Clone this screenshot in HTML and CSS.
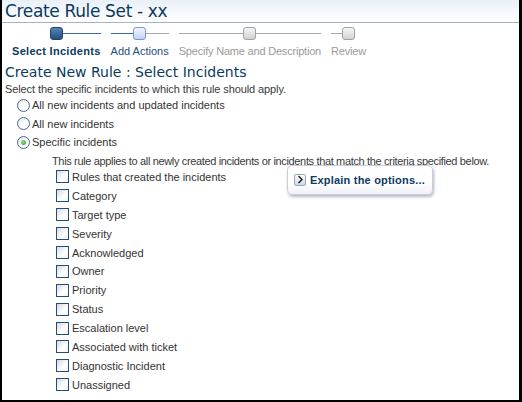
FILE: index.html
```html
<!DOCTYPE html>
<html>
<head>
<meta charset="utf-8">
<link rel="stylesheet" href="styles.css">
</head>
<body>
<div class="frame">
  <header class="titlebar"><h1 class="title">Create Rule Set - xx</h1></header>
  <nav class="train">
    <div class="step done-right current"><div class="node"><span class="box box-current"></span></div><div class="label label-current">Select Incidents</div></div>
    <div class="step blue-left"><div class="node"><span class="box box-next"></span></div><div class="label label-next">Add Actions</div></div>
    <div class="step"><div class="node"><span class="box box-off"></span></div><div class="label label-off">Specify Name and Description</div></div>
    <div class="step last"><div class="node"><span class="box box-off"></span></div><div class="label label-off">Review</div></div>
  </nav>
  <h2 class="heading">Create New Rule : Select Incidents</h2>
  <p class="instr">Select the specific incidents to which this rule should apply.</p>
  <div class="radios">
    <label class="radio-row"><span class="radio"></span>All new incidents and updated incidents</label>
    <label class="radio-row"><span class="radio"></span>All new incidents</label>
    <label class="radio-row"><span class="radio radio-on"></span>Specific incidents</label>
  </div>
  <p class="desc">This rule applies to all newly created incidents or incidents that match the criteria specified below.</p>
  <div class="criteria">
    <ul class="checks">
      <li class="check-row"><span class="check"></span>Rules that created the incidents</li>
      <li class="check-row"><span class="check"></span>Category</li>
      <li class="check-row"><span class="check"></span>Target type</li>
      <li class="check-row"><span class="check"></span>Severity</li>
      <li class="check-row"><span class="check"></span>Acknowledged</li>
      <li class="check-row"><span class="check"></span>Owner</li>
      <li class="check-row"><span class="check"></span>Priority</li>
      <li class="check-row"><span class="check"></span>Status</li>
      <li class="check-row"><span class="check"></span>Escalation level</li>
      <li class="check-row"><span class="check"></span>Associated with ticket</li>
      <li class="check-row"><span class="check"></span>Diagnostic Incident</li>
      <li class="check-row"><span class="check"></span>Unassigned</li>
    </ul>
    <div class="explain"><span class="explain-icon"><svg width="7" height="9" viewBox="0 0 7 9"><path d="M1.5 1 L5 4.5 L1.5 8" fill="none" stroke="#1a1a1a" stroke-width="1.4"/></svg></span><span class="explain-text">Explain the options...</span></div>
  </div>
</div>
</body>
</html>
```
FILE: styles.css
```css
* { box-sizing: border-box; }
html, body { margin: 0; padding: 0; background: #fff; }
body { font-family: "Liberation Sans", Tahoma, Arial, sans-serif; font-size: 11px; color: #333; }
.frame {
  width: 522px; height: 402px;
  border-style: solid; border-color: #000;
  border-width: 0 3px 2px 2px;
  overflow: hidden;
}
.titlebar {
  height: 23px;
  background: linear-gradient(#eaf0f8, #ffffff);
  border-bottom: 1px solid #a7b1bf;
  padding: 1px 0 0 3px;
}
.title {
  margin: 0; font-weight: normal; font-size: 17px; line-height: 20px; letter-spacing: -0.35px;
  color: #0a3a5e; font-family: "DejaVu Sans", Tahoma, sans-serif;
}
.train { display: flex; padding: 4px 0 0 5px; }
.step { display: flex; flex-direction: column; align-items: center; padding: 0 5px; }
.node { position: relative; width: 100%; height: 14px; display: flex; justify-content: center; }
.node::before, .node::after {
  content: ""; position: absolute; top: 6px; height: 1px; background: #a6a6a6;
}
.node::before { left: 0; right: 50%; }
.node::after { left: 50%; right: 0; }
.step:first-child .node::before { display: none; }
.step.last .node::after { display: none; }
.done-right .node::after, .blue-left .node::before { background: #3d64a8; }
.box {
  position: relative; z-index: 1; width: 13px; height: 13px; border-radius: 3px; display: block;
}
.box-current { background: linear-gradient(#5682b5, #23507f); border: 1px solid #1b4570; }
.box-next { background: linear-gradient(#f2f6fd, #c3d3f1); border: 1px solid #7b95cf; }
.box-off { background: linear-gradient(#f6f6f6, #d2d2d2); border: 1px solid #a0a0a0; }
.label { margin-top: 3px; font-size: 11px; line-height: 14px; white-space: nowrap; }
.label-current { font-weight: bold; color: #0b3a63; letter-spacing: 0.3px; }
.label-next { color: #1f4e82; }
.label-off { color: #9a9a9a; letter-spacing: -0.2px; }
.heading {
  margin: 5px 0 0 3px; font-weight: normal; font-size: 14px; line-height: 18px; color: #0a3a5e;
  font-family: "DejaVu Sans", Tahoma, sans-serif;
}
.instr { margin: 1px 0 0 3px; line-height: 14px; color: #3a3a3a; letter-spacing: -0.1px; }
.radios { display: flex; flex-direction: column; padding-left: 15px; margin-top: 0; }
.radio-row { display: flex; align-items: center; height: 18.5px; color: #333; }
.radio {
  width: 13px; height: 13px; border-radius: 50%; margin-right: 2px;
  border: 1px solid #4a6a8e;
  background: radial-gradient(circle at 60% 65%, #fff 0, #fff 35%, #d8dde4 100%);
  position: relative;
}
.radio-on::after {
  content: ""; position: absolute; left: 3px; top: 3px; width: 5px; height: 5px; border-radius: 50%;
  background: radial-gradient(circle at 40% 40%, #8fe07a, #2f9a1e);
}
.desc { margin: 2px 0 0 50px; line-height: 14px; color: #3a3a3a; white-space: nowrap; letter-spacing: -0.35px; }
.criteria { display: flex; align-items: flex-start; padding-left: 54px; margin-top: 0; }
.checks { list-style: none; margin: 0; padding: 0; width: 231px; }
.check-row { display: flex; align-items: center; height: 18.9px; color: #333; }
.check {
  width: 13px; height: 13px; margin-right: 3px; border: 1px solid #1f4f80;
  background: linear-gradient(135deg, #d9d9d9, #ffffff 60%, #f2f2f2);
}
.explain {
  display: flex; align-items: center; margin-top: -3px;
  width: 146px; height: 30px; padding-left: 6px;
  border: 1px solid #c8cdd8; border-radius: 5px;
  background: linear-gradient(#ffffff 60%, #eef1f7);
  box-shadow: 1px 2px 3px rgba(90,100,130,0.45);
  white-space: nowrap;
}
.explain-icon {
  width: 12px; height: 12px; display: flex; align-items: center; justify-content: center;
  border: 1px solid #9aa6bd; border-radius: 2px; background: linear-gradient(#ffffff, #cfd7e6);
  margin-right: 4px;
}
.explain-text { font-weight: bold; color: #0b3a63; font-size: 11px; letter-spacing: 0.2px; }
```
